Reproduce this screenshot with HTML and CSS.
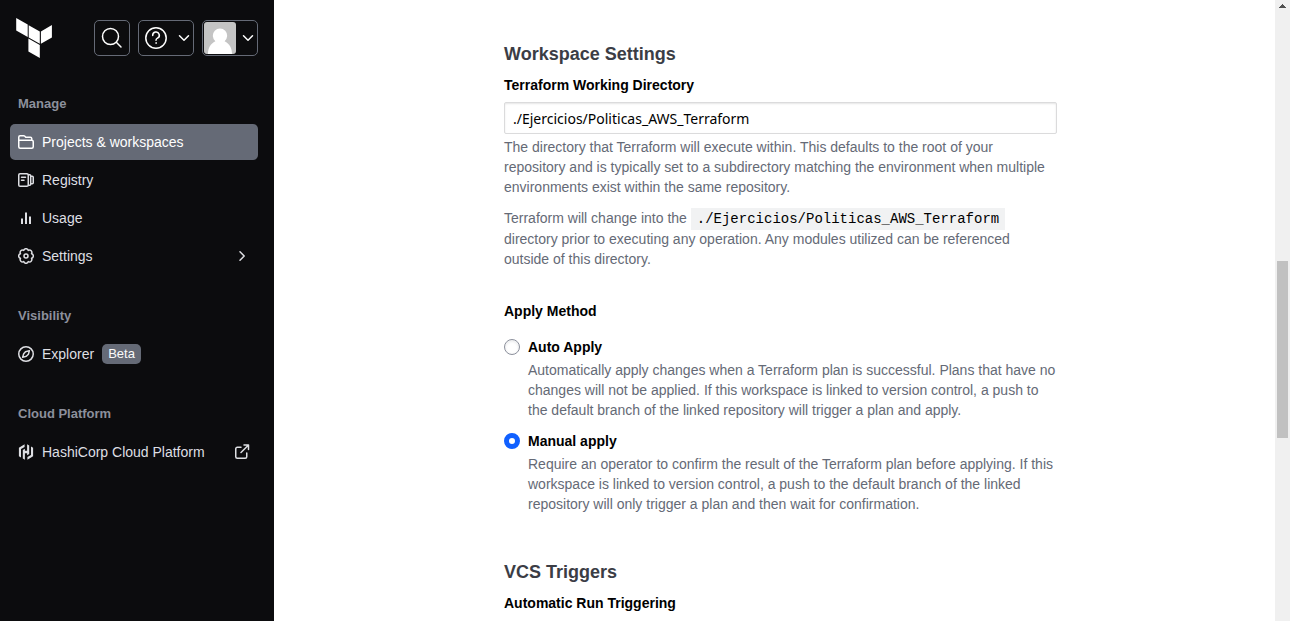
FILE: index.html
```html
<!DOCTYPE html>
<html lang="en">
<head>
<meta charset="utf-8">
<meta name="viewport" content="width=device-width, initial-scale=1">
<title>Workspace Settings</title>
<link rel="stylesheet" href="styles.css">
</head>
<body>
<aside class="sidebar">
  <header class="topbar">
    <a class="logo" href="#" aria-label="Terraform home">
      <svg width="36" height="40" viewBox="0 0 36 40" fill="#fff"><path d="M.2 0 11.7 6.5v12.6L.2 12.6zM12.7 7.2 23.8 13.500v12.300L12.700 19.500zM24.900 13.500 35.900 7.100v12.400L24.900 25.800zM12.400 20.600 23.800 27v13L12.400 33.500z"/></svg>
    </a>
    <button class="tool" type="button" aria-label="Search">
      <svg width="24" height="24" viewBox="0 0 24 24" class="line"><circle cx="10.500" cy="10.500" r="8"/><path d="m16.300 16.300 4.700 4.700"/></svg>
    </button>
    <button class="tool tool-menu" type="button" aria-label="Help menu">
      <svg width="24" height="24" viewBox="0 0 24 24" class="line"><circle cx="12" cy="12" r="10.200"/><path d="M8.700 9.500a3.300 3.300 0 1 1 4.800 2.700c-1 .5-1.500 1-1.500 2"/><circle cx="12" cy="17" r=".3" fill="currentColor" stroke-width="1"/></svg>
      <svg width="16" height="16" viewBox="0 0 16 16" class="line"><path d="m3.500 5.800 4.500 4.400 4.500-4.400"/></svg>
    </button>
    <button class="tool tool-user" type="button" aria-label="User menu">
      <svg class="avatar" width="32" height="32" viewBox="0 0 32 32"><path fill="#c4c4c4" d="M0 0h32v32H0z"/><path fill="#fff" d="M4 32c0-6 2.500-10.500 7.400-12.800a7.200 7.200 0 1 1 9.200 0C25.500 21.500 28 26 28 32z"/></svg>
      <svg width="16" height="16" viewBox="0 0 16 16" class="line"><path d="m3.500 5.800 4.500 4.400 4.500-4.400"/></svg>
    </button>
  </header>

  <nav class="nav" aria-label="Main">
    <section class="group">
      <h2 class="group-title">Manage</h2>
      <ul class="items">
        <li><a class="item item-active" href="#" aria-current="page">
          <svg width="16" height="16" viewBox="0 0 16 16" class="line"><path d="M.75 12.700V3.200c0-.8.600-1.450 1.400-1.450h3.600c.4 0 .8.200 1.100.5l.9 1h4.600c.8 0 1.400.6 1.400 1.400M.75 6.250h13c.8 0 1.500.6 1.500 1.500v5c0 .8-.7 1.500-1.500 1.500H2.250c-.8 0-1.500-.7-1.500-1.500M13.750 4.500v1.700"/></svg>
          Projects &amp; workspaces</a></li>
        <li><a class="item" href="#">
          <svg width="16" height="16" viewBox="0 0 16 16" class="line"><rect x=".75" y="1.750" width="9.500" height="12.500" rx="1.300"/><path d="M3.500 5.250h4M3.500 8.250h2.500M10.500 2.750h1.200c.6 0 1 .4 1 1v8.500c0 .6-.4 1-1 1h-1.200M13 4.250h1.250c.5 0 1 .4 1 1v5.500c0 .6-.5 1-1 1H13"/></svg>
          Registry</a></li>
        <li><a class="item" href="#">
          <svg width="16" height="16" viewBox="0 0 16 16" class="line bars"><path d="M4 8.500V14M8 2.500V14M12 6.500V14"/></svg>
          Usage</a></li>
        <li><button class="item" type="button">
          <svg width="16" height="16" viewBox="0 0 16 16" class="line"><path d="M5.700 2.460C6.400.1 9.600.1 10.300 2.460 12.450 1.280 14.720 3.550 13.540 5.700 15.900 6.400 15.900 9.600 13.540 10.300 14.720 12.450 12.450 14.720 10.300 13.540 9.600 15.900 6.400 15.900 5.700 13.540 3.550 14.720 1.280 12.450 2.460 10.300.1 9.600.1 6.400 2.460 5.700 1.280 3.550 3.550 1.280 5.700 2.460z"/><circle cx="8" cy="8" r="2"/></svg>
          Settings
          <svg width="16" height="16" viewBox="0 0 16 16" class="line trail"><path d="m6 3.800 4.200 4.200L6 12.200"/></svg>
        </button></li>
      </ul>
    </section>
    <section class="group">
      <h2 class="group-title">Visibility</h2>
      <ul class="items">
        <li><a class="item" href="#">
          <svg width="16" height="16" viewBox="0 0 16 16" class="line"><circle cx="8" cy="8" r="7.250"/><path d="m11.400 4.600-3.900 1.100-1.800 2.100-1.100 3.600 3.700-1.100 2.100-2z"/></svg>
          Explorer <span class="badge">Beta</span></a></li>
      </ul>
    </section>
    <section class="group">
      <h2 class="group-title">Cloud Platform</h2>
      <ul class="items">
        <li><a class="item" href="#">
          <svg width="16" height="16" viewBox="0 0 16 16" fill="currentColor"><path d="M6.600.3.900 3.700v8.600L3 13.500V5l3.600-2.100zM6.900 4.800 4.800 6v8.500l2.100 1.200V9.300h2.200v1.900l2.100-1.200V1.500L9.100.3v6.400H6.900zM13 2.500V11l-3.600 2.100v2.600l5.700-3.400V3.700z"/></svg>
          HashiCorp Cloud Platform
          <svg width="16" height="16" viewBox="0 0 16 16" class="line trail"><path d="M12.750 9v3.750c0 .8-.7 1.500-1.500 1.500h-8c-.8 0-1.500-.7-1.500-1.500v-8c0-.8.7-1.500 1.500-1.500H7M10 1h4.500v4.500M14.500 1 7 8.500"/></svg>
        </a></li>
      </ul>
    </section>
  </nav>
</aside>

<main class="main">
  <form class="settings">
    <h1 class="title">Workspace Settings</h1>
    <label class="label" for="dir">Terraform Working Directory</label>
    <input class="text" id="dir" type="text" value="./Ejercicios/Politicas_AWS_Terraform">
    <p class="help">The directory that Terraform will execute within. This defaults to the root of your repository and is typically set to a subdirectory matching the environment when multiple environments exist within the same repository.</p>
    <p class="help">Terraform will change into the <code class="code">./Ejercicios/Politicas_AWS_Terraform</code> directory prior to executing any operation. Any modules utilized can be referenced outside of this directory.</p>

    <fieldset class="choices">
      <legend class="label">Apply Method</legend>
      <div class="choice">
        <input class="radio" type="radio" name="apply" id="auto">
        <div>
          <label class="label" for="auto">Auto Apply</label>
          <p class="detail">Automatically apply changes when a Terraform plan is successful. Plans that have no changes will not be applied. If this workspace is linked to version control, a push to the default branch of the linked repository will trigger a plan and apply.</p>
        </div>
      </div>
      <div class="choice">
        <input class="radio" type="radio" name="apply" id="manual" checked>
        <div>
          <label class="label" for="manual">Manual apply</label>
          <p class="detail">Require an operator to confirm the result of the Terraform plan before applying. If this workspace is linked to version control, a push to the default branch of the linked repository will only trigger a plan and then wait for confirmation.</p>
        </div>
      </div>
    </fieldset>

    <h2 class="title">VCS Triggers</h2>
    <h3 class="label">Automatic Run Triggering</h3>
  </form>
</main>

<div class="scrollbar" aria-hidden="true">
  <svg width="7" height="4" viewBox="0 0 7 4" fill="#505050"><path d="M3 0h1v1h1v1h1v1h1v1H0V3h1V2h1V1h1z"/></svg>
  <div class="thumb"></div>
</div>
</body>
</html>
```

FILE: styles.css
```css
* { box-sizing: border-box; }

body {
  display: flex;
  min-height: 100vh;
  margin: 0;
  background: #fff;
  color: #000;
  font: 14px/20px "Liberation Sans", Arial, sans-serif;
}

h1, h2, h3, p, ul { margin: 0; padding: 0; }
ul { list-style: none; }
button, input { font: inherit; color: inherit; }
svg { display: block; flex: none; }

.line {
  fill: none;
  stroke: currentColor;
  stroke-width: 1.5;
  stroke-linecap: round;
  stroke-linejoin: round;
}
.bars { stroke-width: 2; stroke-linecap: butt; }

/* Sidebar */
.sidebar {
  flex: 0 0 274px;
  padding: 18px 16px 16px 10px;
  background: #0c0c0e;
  color: #dedfe3;
}
.topbar {
  display: flex;
  align-items: center;
  gap: 8px;
  padding-left: 6px;
}
.logo { margin-right: auto; }
.tool {
  display: flex;
  align-items: center;
  justify-content: center;
  width: 36px;
  height: 36px;
  padding: 0;
  border: 1px solid #656a76;
  border-radius: 5px;
  background: none;
  color: #fff;
}
.tool-menu { width: 56px; gap: 8px; padding-left: 3px; }
.tool-user { width: 56px; gap: 4px; }
.avatar { border-radius: 3px; }

.nav {
  display: flex;
  flex-direction: column;
  gap: 32px;
  padding-top: 36px;
}
.group-title {
  margin-bottom: 10px;
  padding-left: 8px;
  color: #8c909c;
  font-size: 13px;
  line-height: 20px;
}
.items { display: flex; flex-direction: column; gap: 2px; }
.item {
  display: flex;
  align-items: center;
  gap: 8px;
  width: 100%;
  height: 36px;
  padding: 0 8px;
  border: 0;
  border-radius: 5px;
  background: none;
  color: #dedfe3;
  text-align: left;
  text-decoration: none;
}
.item-active { background: #656a76; color: #fff; }
.trail { margin-left: auto; }
.badge {
  padding: 0 6px;
  border-radius: 5px;
  background: #656a76;
  color: #fafafa;
  font-size: 13px;
}

/* Content */
.main {
  flex: 1;
  min-width: 0;
  padding: 42px 218px 8px 230px;
}
.title {
  margin-bottom: 9px;
  color: #3b3d45;
  font-size: 18px;
  line-height: 24px;
}
.label {
  display: block;
  padding: 0;
  font-size: 14px;
  font-weight: 700;
  line-height: 20px;
}
.text {
  width: 100%;
  height: 32px;
  margin: 7px 0 3px;
  padding: 0 8px;
  border: 1px solid #dbdbdc;
  border-radius: 2px;
  background: #fff;
  box-shadow: inset 0 1px 2px #0000001a;
  font-family: "Noto Sans", sans-serif;
  font-size: 14px;
}
.help { margin-bottom: 11px; color: #656a76; }
.code {
  padding: 3px 6px;
  background: #f1f2f3;
  color: #000;
  font: 14px/20px "Liberation Mono", monospace;
}
.choices {
  margin: 32px 0 46px;
  padding: 0;
  border: 0;
}
.choice {
  display: grid;
  grid-template-columns: 16px 1fr;
  gap: 8px;
  margin-top: 16px;
}
.choice + .choice { margin-top: 11px; }
.radio {
  appearance: none;
  width: 16px;
  height: 16px;
  margin: 2px 0;
  border: 1px solid #8c909c;
  border-radius: 50%;
  background: #fff;
  box-shadow: inset 0 1px 2px 1px #656a761a;
}
.radio:checked { border: 5px solid #1060ff; box-shadow: none; }
.detail { margin-top: 3px; color: #656a76; }

/* Scroll track */
.scrollbar {
  display: flex;
  flex: 0 0 15px;
  flex-direction: column;
  align-items: center;
  padding: 4px 2px;
  background: #f0f0f0;
}
.thumb {
  width: 11px;
  height: 177px;
  margin-top: 253px;
  background: #c1c1c1;
}
```
